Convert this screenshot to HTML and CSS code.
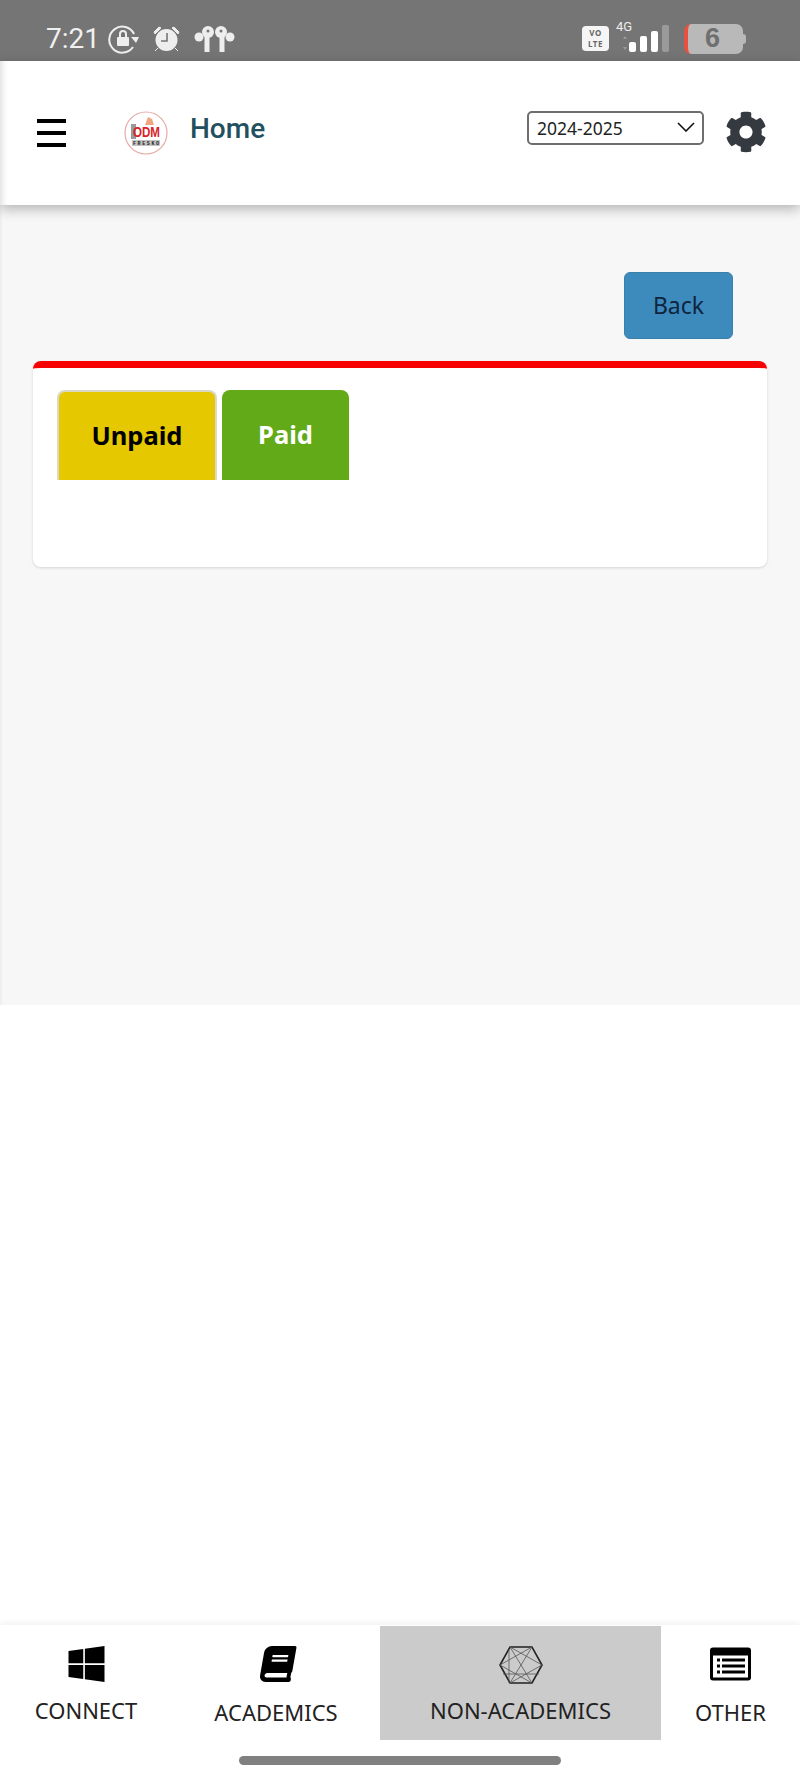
FILE: index.html
```html
<!DOCTYPE html>
<html lang="en">

<head>
    <meta charset="UTF-8">
    <meta name="viewport" content="width=device-width, initial-scale=1.0">
    <title>Home</title>
    <link rel="stylesheet" href="styles.css">
</head>

<body>
    <div class="page">
        <!-- phone status bar -->
        <div class="statusbar">
            <div class="status-left">
                <span class="clock">7:21</span>
                <svg class="icon-rotate" viewBox="0 0 32 30">
                    <path d="M25 23a13 13 0 1 1 1-13" fill="none" stroke="#eee" stroke-width="2"/>
                    <path d="M23 13h8l-3 6z" fill="#eee"/>
                    <rect x="9" y="13" width="12" height="9" rx="1" fill="#eee"/>
                    <path d="M12 13v-3a3 3 0 0 1 6 0v3" fill="none" stroke="#eee" stroke-width="2"/>
                </svg>
                <svg class="icon-alarm" viewBox="0 0 27 26">
                    <circle cx="13.500" cy="14" r="11" fill="#eee"/>
                    <path d="M1 6l5-5 2 1-6 6zM26 6l-5-5-2 1 6 6zM5 22l-3 3M22 22l3 3" fill="#eee" stroke="#eee"/>
                    <path d="M14 7v8H8" fill="none" stroke="#757575" stroke-width="1.600"/>
                </svg>
                <svg class="icon-pods" viewBox="0 0 41 27">
                    <circle cx="14" cy="7" r="6" fill="#eee"/>
                    <circle cx="5" cy="12" r="4.500" fill="#eee"/>
                    <rect x="10.500" y="11" width="5" height="16" fill="#eee"/>
                    <circle cx="14" cy="6" r="1.500" fill="#757575"/>
                    <circle cx="27" cy="7" r="6" fill="#eee"/>
                    <circle cx="36" cy="12" r="4.500" fill="#eee"/>
                    <rect x="25.500" y="11" width="5" height="16" fill="#eee"/>
                    <circle cx="27" cy="6" r="1.500" fill="#757575"/>
                </svg>
            </div>
            <div class="status-right">
                <div class="volte">VO<br>LTE</div>
                <div class="signal">
                    <span class="net-type">4G</span>
                    <svg class="icon-signal" viewBox="0 0 49 27">
                        <path d="M3 14l2-3 2 3zM3 22l2 3 2-3z" fill="#9a9a9a"/>
                        <rect x="9" y="17" width="7" height="10" rx="2" fill="#fff"/>
                        <rect x="20" y="11" width="7" height="16" rx="2" fill="#fff"/>
                        <rect x="31" y="6" width="7" height="21" rx="2" fill="#fff"/>
                        <rect x="42" y="0" width="7" height="27" rx="2" fill="#9a9a9a"/>
                    </svg>
                </div>
                <div class="battery">
                    <span class="battery-level">6</span>
                </div>
                <div class="battery-nub"></div>
            </div>
        </div>

        <div class="header">
            <div class="burger">
                <span></span>
                <span></span>
                <span></span>
            </div>
            <svg class="logo" viewBox="0 0 44 44">
                <circle cx="22" cy="22" r="21" fill="#fff" stroke="#e6aaa6" stroke-width="1.200"/>
                <path d="M21 14l3-8 4 2 2 6z" fill="#eea77e"/>
                <rect x="7" y="13" width="5" height="15" fill="#9a9a9a"/>
                <text x="22.500" y="26" textLength="27" lengthAdjust="spacingAndGlyphs" class="logo-name">ODM</text>
                <rect x="8" y="29" width="28" height="6" fill="#c4c4c4"/>
                <text x="22" y="34" textLength="26" class="logo-sub">FRESKO</text>
            </svg>
            <div class="page-title">Home</div>
            <div class="year-select">
                <select>
                    <option>2024-2025</option>
                </select>
                <svg class="chevron" viewBox="0 0 18 10">
                    <path d="M1 1l8 8 8-8" fill="none" stroke="#111" stroke-width="1.600"/>
                </svg>
            </div>
            <svg class="gear" viewBox="0 0 512 512">
                <path d="M487.4 315.7l-42.6-24.6c4.3-23.2 4.3-47 0-70.2l42.6-24.6c4.900-2.800 7.100-8.600 5.500-14-11.100-35.600-30-67.800-54.700-94.600-3.800-4.100-10-5.100-14.800-2.300L380.800 110c-17.900-15.400-38.500-27.300-60.800-35.100V25.800c0-5.600-3.900-10.500-9.400-11.700-36.700-8.200-74.300-7.800-109.200 0-5.500 1.200-9.400 6.100-9.400 11.700V75c-22.200 7.900-42.800 19.800-60.800 35.100L88.700 85.500c-4.900-2.800-11-1.900-14.800 2.300-24.700 26.700-43.600 58.900-54.700 94.600-1.700 5.400.6 11.200 5.500 14L67.300 221c-4.300 23.200-4.300 47 0 70.200l-42.600 24.600c-4.900 2.800-7.100 8.600-5.500 14 11.100 35.600 30 67.800 54.700 94.600 3.800 4.100 10 5.100 14.800 2.300l42.600-24.600c17.900 15.400 38.500 27.300 60.800 35.100v49.200c0 5.600 3.900 10.500 9.400 11.700 36.700 8.200 74.300 7.800 109.200 0 5.500-1.200 9.400-6.100 9.400-11.700v-49.200c22.200-7.900 42.800-19.800 60.800-35.100l42.600 24.600c4.900 2.800 11 1.900 14.800-2.300 24.700-26.700 43.600-58.900 54.700-94.600 1.500-5.500-.7-11.300-5.600-14.100zM256 336c-44.100 0-80-35.900-80-80s35.900-80 80-80 80 35.900 80 80-35.900 80-80 80z"/>
            </svg>
        </div>

        <div class="main">
            <div class="back-row">
                <button class="back-btn">Back</button>
            </div>
            <div class="card">
                <div class="tabs">
                    <div class="tab tab-unpaid">Unpaid</div>
                    <div class="tab tab-paid">Paid</div>
                </div>
            </div>
        </div>

        <div class="spacer"></div>

        <div class="bottom-nav">
            <div class="nav-item">
                <svg class="nav-icon" viewBox="0 32 448 448">
                    <path d="M0 93.700l183.600-25.300v177.400H0V93.700zm0 324.600l183.600 25.300V268.400H0v149.900zm203.800 28L448 480V268.400H203.800v177.900zm0-380.600v180.100H448V32L203.800 65.700z"/>
                </svg>
                <span>CONNECT</span>
            </div>
            <div class="nav-item nav-item-low">
                <svg class="nav-icon" viewBox="-60 0 560 512">
                    <g transform="translate(60 0) skewX(-10)">
                        <path d="M448 360V24c0-13.300-10.700-24-24-24H96C43 0 0 43 0 96v320c0 53 43 96 96 96h328c13.300 0 24-10.700 24-24v-16c0-7.500-3.500-14.300-8.900-18.700-4.200-15.400-4.200-59.300 0-74.700 5.400-4.300 8.900-11.100 8.900-18.600zM128 134c0-3.300 2.700-6 6-6h212c3.300 0 6 2.700 6 6v20c0 3.300-2.700 6-6 6H134c-3.300 0-6-2.700-6-6v-20zm0 64c0-3.300 2.700-6 6-6h212c3.300 0 6 2.700 6 6v20c0 3.300-2.700 6-6 6H134c-3.300 0-6-2.700-6-6v-20zm253.400 250H96c-17.700 0-32-14.300-32-32 0-17.600 14.400-32 32-32h285.400c-1.900 17.100-1.900 46.900 0 64z"/>
                    </g>
                </svg>
                <span>ACADEMICS</span>
            </div>
            <div class="nav-item nav-item-active">
                <svg class="nav-icon nav-icon-hex" viewBox="0 0 44 38">
                    <path d="M11 1h22l10 18-10 18H11L1 19z" fill="none" stroke="#222" stroke-width="1.600"/>
                    <path d="M11 1l22 36M33 1L11 37M1 19l32-18M43 19L11 1M11 37l32-18M4 28h36M10 4v33M1 19l32 18" fill="none" stroke="#555" stroke-width=".8"/>
                </svg>
                <span>NON-ACADEMICS</span>
            </div>
            <div class="nav-item nav-item-low">
                <svg class="nav-icon" viewBox="0 0 41 33">
                    <rect width="41" height="33" rx="3"/>
                    <rect x="3" y="8" width="35" height="22" fill="#fff"/>
                    <rect x="7" y="11" width="3" height="3"/>
                    <rect x="7" y="17" width="3" height="3"/>
                    <rect x="7" y="23" width="3" height="3"/>
                    <rect x="12" y="11" width="23" height="3"/>
                    <rect x="12" y="17" width="23" height="3"/>
                    <rect x="12" y="23" width="23" height="3"/>
                </svg>
                <span>OTHER</span>
            </div>
        </div>

        <div class="gesture-area">
            <div class="gesture-pill"></div>
        </div>
    </div>
</body>

</html>
```

FILE: styles.css
```css
* {
    box-sizing: border-box;
}

body {
    margin: 0;
    font-family: "Noto Sans", sans-serif;
    background: #fff;
}

.page {
    display: flex;
    flex-direction: column;
    height: 1778px;
    overflow: hidden;
}

/* status bar */
.statusbar {
    display: flex;
    justify-content: space-between;
    align-items: center;
    height: 61px;
    padding: 16px 54px 0 46px;
    background: #757575;
}

.status-left,
.status-right {
    display: flex;
    align-items: center;
}

.clock {
    font-family: Roboto, sans-serif;
    font-size: 28px;
    color: #f0f0f0;
}

.icon-rotate {
    width: 32px;
    height: 30px;
    margin-left: 8px;
}

.icon-alarm {
    width: 27px;
    height: 26px;
    margin-left: 13px;
}

.icon-pods {
    width: 41px;
    height: 27px;
    margin-left: 14px;
}

.volte {
    width: 27px;
    height: 25px;
    padding-top: 1px;
    border-radius: 4px;
    background: #f5f5f5;
    color: #666;
    font-size: 8px;
    font-weight: 700;
    line-height: 11px;
    letter-spacing: 0.5px;
    text-align: center;
}

.signal {
    position: relative;
    width: 49px;
    height: 27px;
    margin-left: 11px;
}

.net-type {
    position: absolute;
    left: -4px;
    top: -6px;
    font-family: Roboto, sans-serif;
    font-size: 13px;
    color: #eee;
}

.icon-signal {
    display: block;
    width: 49px;
    height: 27px;
}

.battery {
    display: flex;
    align-items: center;
    justify-content: center;
    width: 59px;
    height: 30px;
    margin-left: 15px;
    padding-right: 6px;
    border-left: 4px solid #e8503f;
    border-radius: 7px;
    background: #b9b9b9;
}

.battery-level {
    font-family: "Liberation Sans", sans-serif;
    font-size: 27px;
    font-weight: 700;
    color: #6f6f6f;
}

.battery-nub {
    width: 3px;
    height: 10px;
    border-radius: 0 3px 3px 0;
    background: #b9b9b9;
}

/* header */
.header {
    position: relative;
    z-index: 2;
    display: flex;
    align-items: center;
    height: 144px;
    padding: 0 33px 0 37px;
    background: #fff;
    box-shadow: 0 4px 12px rgba(0, 0, 0, 0.28), inset 7px 0 6px -5px rgba(0, 0, 0, 0.14);
}

.burger {
    display: flex;
    flex-direction: column;
    gap: 8px;
    width: 29px;
}

.burger span {
    height: 4px;
    background: #000;
}

.logo {
    width: 44px;
    height: 44px;
    margin-left: 58px;
}

.logo-name {
    font-family: "Liberation Sans", sans-serif;
    font-size: 15px;
    font-weight: 700;
    fill: #d8232a;
    text-anchor: middle;
}

.logo-sub {
    font-family: "Liberation Mono", monospace;
    font-size: 5px;
    font-weight: 700;
    fill: #222;
    text-anchor: middle;
}

.page-title {
    margin-left: 22px;
    padding-bottom: 10px;
    font-family: Roboto, sans-serif;
    font-size: 28px;
    font-weight: 500;
    color: #22505f;
}

.year-select {
    position: relative;
    width: 177px;
    height: 34px;
    margin-left: auto;
    margin-bottom: 10px;
}

.year-select select {
    width: 100%;
    height: 100%;
    padding: 0 0 0 8px;
    border: 2px solid #6e6e6e;
    border-radius: 5px;
    background: #fff;
    font-family: "Noto Sans", sans-serif;
    font-size: 17.500px;
    color: #222;
    appearance: none;
}

.chevron {
    position: absolute;
    top: 11px;
    right: 9px;
    width: 18px;
    height: 10px;
}

.gear {
    width: 42px;
    height: 42px;
    margin-bottom: 2px;
    margin-left: 21px;
    fill: #343a40;
}

/* content */
.main {
    height: 800px;
    background: #f7f7f7;
    box-shadow: inset 2px 0 0 #efefef;
}

.back-row {
    display: flex;
    justify-content: flex-end;
    padding: 67px 67px 22px 0;
}

.back-btn {
    width: 109px;
    height: 67px;
    padding-bottom: 3px;
    border: 1px solid #3a80ad;
    border-radius: 6px;
    background: #3d8bbd;
    font-family: "Noto Sans", sans-serif;
    font-size: 23px;
    color: #10243e;
}

.card {
    height: 206px;
    margin: 0 33px;
    padding: 22px 24px 0;
    border-top: 7px solid #f60000;
    border-radius: 8px;
    background: #fff;
    box-shadow: 0 1px 3px rgba(0, 0, 0, 0.14);
}

.tabs {
    display: flex;
    gap: 5px;
}

.tab {
    display: flex;
    align-items: center;
    justify-content: center;
    height: 90px;
    padding-bottom: 3px;
    border-radius: 8px 8px 0 0;
    font-size: 25.500px;
    font-weight: 700;
}

.tab-unpaid {
    width: 160px;
    border: 2px solid #dcd8c4;
    border-bottom: 0;
    background: #e5c800;
    color: #000;
}

.tab-paid {
    width: 127px;
    background: #63aa19;
    color: #fff;
}

.spacer {
    flex: 1;
}

/* bottom navigation */
.bottom-nav {
    display: grid;
    grid-template-columns: 172px 208px 281px 139px;
    height: 115px;
    background: #fff;
    box-shadow: 0 -3px 6px rgba(0, 0, 0, 0.05);
}

.nav-item {
    display: flex;
    flex-direction: column;
    align-items: center;
    padding-top: 21px;
    font-size: 22px;
    line-height: 30px;
    color: #222;
}

.nav-item span {
    margin-top: 13px;
}

.nav-item-low span {
    margin-top: 15px;
}

.nav-item-active {
    height: 114px;
    margin-top: 1px;
    padding-top: 20px;
    background: #cbcbcb;
}

.nav-item-active span {
    margin-top: 11px;
}

.nav-icon {
    width: 41px;
    height: 36px;
}

.nav-icon-hex {
    width: 44px;
    height: 38px;
}

.gesture-area {
    display: flex;
    justify-content: center;
    height: 38px;
    padding-top: 16px;
}

.gesture-pill {
    width: 322px;
    height: 9px;
    border-radius: 5px;
    background: #808080;
}
```
